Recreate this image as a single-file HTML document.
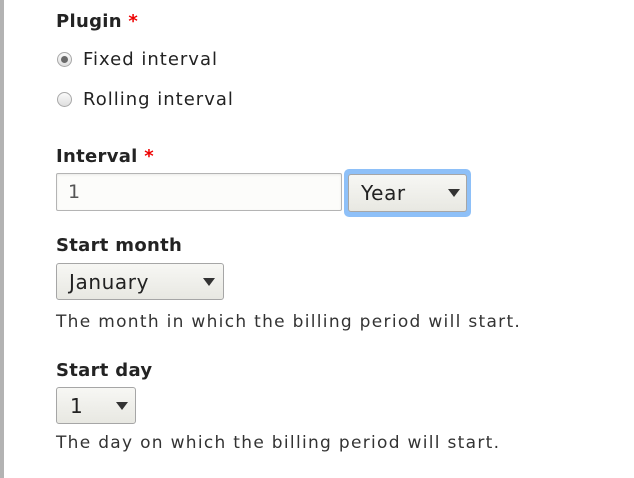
<!DOCTYPE html>
<html><head><style>
body{margin:0;width:634px;height:478px;background:#fff;position:relative;overflow:hidden;font-family:"DejaVu Sans","Liberation Sans",sans-serif;color:#222;}
.bar{position:absolute;left:0;top:0;width:4px;height:478px;background:#b3b3b3;}
.t{position:absolute;white-space:nowrap;line-height:1;}
.lb{font-weight:bold;font-size:18px;color:#232323;letter-spacing:0.3px;}
.st{color:#e00;}
.r{font-size:18px;color:#222;letter-spacing:1px;}
.d{font-size:17px;color:#333;letter-spacing:1.3px;}
.radio{position:absolute;width:13px;height:13px;border:1px solid #a8a8a8;border-radius:50%;background:linear-gradient(#fafafa,#dedede);}
.radio.on::after{content:"";position:absolute;left:3px;top:3px;width:7px;height:7px;border-radius:50%;background:#6a6a6a;}
.sel{position:absolute;box-sizing:border-box;border:1px solid #a6a6a6;border-radius:3px;background:linear-gradient(#f7f7f4,#e8e8e2);font-size:20px;color:#222;letter-spacing:0.6px;}
.sel span{position:absolute;top:6px;}
.arr{position:absolute;top:14px;width:0;height:0;border-left:6px solid transparent;border-right:6px solid transparent;border-top:8px solid #333;}
</style></head><body>
<div class="bar"></div>
<div class="t lb" style="left:56px;top:13px">Plugin <span class="st">*</span></div>
<div class="radio on" style="left:57px;top:52px"></div>
<div class="t r" style="left:83px;top:51px">Fixed interval</div>
<div class="radio" style="left:57px;top:92px"></div>
<div class="t r" style="left:83px;top:91px">Rolling interval</div>
<div class="t lb" style="left:56px;top:148px">Interval <span class="st">*</span></div>
<div style="position:absolute;left:56px;top:173px;width:286px;height:38px;box-sizing:border-box;border:1px solid #b4b4b4;border-radius:2px;background:#fcfcfa;box-shadow:inset 0 1px 2px rgba(0,0,0,.08)"></div>
<div class="t" style="left:68px;top:183px;font-size:19px;color:#555">1</div>
<div style="position:absolute;left:344px;top:169px;width:127px;height:48px;box-sizing:border-box;border-radius:5px;background:#8ec0f8"></div>
<div class="sel" style="left:348px;top:174px;width:119px;height:38px"><span style="left:12px">Year</span><div class="arr" style="left:99px"></div></div>
<div class="t lb" style="left:56px;top:237px">Start month</div>
<div class="sel" style="left:56px;top:263px;width:168px;height:37px"><span style="left:12px">January</span><div class="arr" style="left:146px"></div></div>
<div class="t d" style="left:56px;top:314px">The month in which the billing period will start.</div>
<div class="t lb" style="left:56px;top:362px">Start day</div>
<div class="sel" style="left:56px;top:387px;width:80px;height:37px"><span style="left:13px">1</span><div class="arr" style="left:59px"></div></div>
<div class="t d" style="left:56px;top:435px">The day on which the billing period will start.</div>
</body></html>
